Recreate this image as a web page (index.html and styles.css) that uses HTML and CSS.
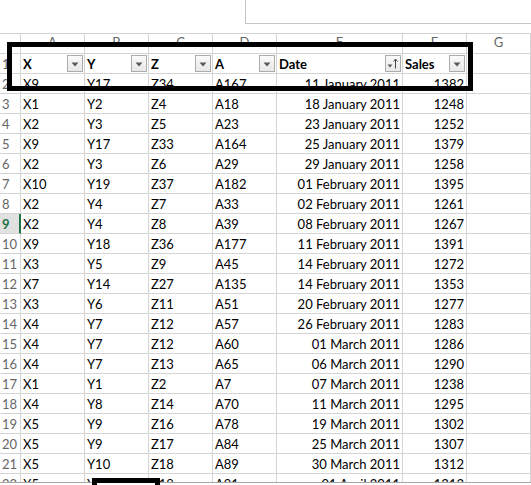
FILE: index.html
```html
<!DOCTYPE html>
<html>
<head>
<meta charset="utf-8">
<link rel="stylesheet" href="styles.css">
</head>
<body>
<div class="toolbar"><div class="spacer"></div><div class="formula"></div></div>
<div class="sheet">
  <div class="row colhdr">
    <div class="c rh"></div><div class="c">A</div><div class="c">B</div><div class="c">C</div><div class="c">D</div><div class="c">E</div><div class="c">F</div><div class="c">G</div>
  </div>
  <div class="row head">
    <div class="c rh">1</div>
    <div class="c t">X<span class="fb"><svg width="14" height="15" viewBox="0 0 14 15"><path d="M3.5 6.5h7l-3.5 4z" fill="#5a5a5a"/></svg></span></div>
    <div class="c t">Y<span class="fb"><svg width="14" height="15" viewBox="0 0 14 15"><path d="M3.5 6.5h7l-3.5 4z" fill="#5a5a5a"/></svg></span></div>
    <div class="c t">Z<span class="fb"><svg width="14" height="15" viewBox="0 0 14 15"><path d="M3.5 6.5h7l-3.5 4z" fill="#5a5a5a"/></svg></span></div>
    <div class="c t">A<span class="fb"><svg width="14" height="15" viewBox="0 0 14 15"><path d="M3.5 6.5h7l-3.5 4z" fill="#5a5a5a"/></svg></span></div>
    <div class="c t">Date<span class="fb"><svg width="14" height="15" viewBox="0 0 14 15"><path d="M1.5 8.5h5l-2.5 3z" fill="#5a5a5a"/><path d="M9.5 12.5V3.5" stroke="#444" stroke-width="1"/><path d="M7.5 5.5l2-2.5 2 2.5" fill="none" stroke="#444" stroke-width="1"/></svg></span></div>
    <div class="c t">Sales<span class="fb"><svg width="14" height="15" viewBox="0 0 14 15"><path d="M3.5 6.5h7l-3.5 4z" fill="#5a5a5a"/></svg></span></div>
    <div class="c"></div>
  </div>
  <div class="row"><div class="c rh">2</div><div class="c t">X9</div><div class="c t">Y17</div><div class="c t">Z34</div><div class="c t">A167</div><div class="c n">11 January 2011</div><div class="c n">1382</div><div class="c"></div></div>
  <div class="row"><div class="c rh">3</div><div class="c t">X1</div><div class="c t">Y2</div><div class="c t">Z4</div><div class="c t">A18</div><div class="c n">18 January 2011</div><div class="c n">1248</div><div class="c"></div></div>
  <div class="row"><div class="c rh">4</div><div class="c t">X2</div><div class="c t">Y3</div><div class="c t">Z5</div><div class="c t">A23</div><div class="c n">23 January 2011</div><div class="c n">1252</div><div class="c"></div></div>
  <div class="row"><div class="c rh">5</div><div class="c t">X9</div><div class="c t">Y17</div><div class="c t">Z33</div><div class="c t">A164</div><div class="c n">25 January 2011</div><div class="c n">1379</div><div class="c"></div></div>
  <div class="row"><div class="c rh">6</div><div class="c t">X2</div><div class="c t">Y3</div><div class="c t">Z6</div><div class="c t">A29</div><div class="c n">29 January 2011</div><div class="c n">1258</div><div class="c"></div></div>
  <div class="row"><div class="c rh">7</div><div class="c t">X10</div><div class="c t">Y19</div><div class="c t">Z37</div><div class="c t">A182</div><div class="c n">01 February 2011</div><div class="c n">1395</div><div class="c"></div></div>
  <div class="row"><div class="c rh">8</div><div class="c t">X2</div><div class="c t">Y4</div><div class="c t">Z7</div><div class="c t">A33</div><div class="c n">02 February 2011</div><div class="c n">1261</div><div class="c"></div></div>
  <div class="row"><div class="c rh sel">9</div><div class="c t">X2</div><div class="c t">Y4</div><div class="c t">Z8</div><div class="c t">A39</div><div class="c n">08 February 2011</div><div class="c n">1267</div><div class="c"></div></div>
  <div class="row"><div class="c rh">10</div><div class="c t">X9</div><div class="c t">Y18</div><div class="c t">Z36</div><div class="c t">A177</div><div class="c n">11 February 2011</div><div class="c n">1391</div><div class="c"></div></div>
  <div class="row"><div class="c rh">11</div><div class="c t">X3</div><div class="c t">Y5</div><div class="c t">Z9</div><div class="c t">A45</div><div class="c n">14 February 2011</div><div class="c n">1272</div><div class="c"></div></div>
  <div class="row"><div class="c rh">12</div><div class="c t">X7</div><div class="c t">Y14</div><div class="c t">Z27</div><div class="c t">A135</div><div class="c n">14 February 2011</div><div class="c n">1353</div><div class="c"></div></div>
  <div class="row"><div class="c rh">13</div><div class="c t">X3</div><div class="c t">Y6</div><div class="c t">Z11</div><div class="c t">A51</div><div class="c n">20 February 2011</div><div class="c n">1277</div><div class="c"></div></div>
  <div class="row"><div class="c rh">14</div><div class="c t">X4</div><div class="c t">Y7</div><div class="c t">Z12</div><div class="c t">A57</div><div class="c n">26 February 2011</div><div class="c n">1283</div><div class="c"></div></div>
  <div class="row"><div class="c rh">15</div><div class="c t">X4</div><div class="c t">Y7</div><div class="c t">Z12</div><div class="c t">A60</div><div class="c n">01 March 2011</div><div class="c n">1286</div><div class="c"></div></div>
  <div class="row"><div class="c rh">16</div><div class="c t">X4</div><div class="c t">Y7</div><div class="c t">Z13</div><div class="c t">A65</div><div class="c n">06 March 2011</div><div class="c n">1290</div><div class="c"></div></div>
  <div class="row"><div class="c rh">17</div><div class="c t">X1</div><div class="c t">Y1</div><div class="c t">Z2</div><div class="c t">A7</div><div class="c n">07 March 2011</div><div class="c n">1238</div><div class="c"></div></div>
  <div class="row"><div class="c rh">18</div><div class="c t">X4</div><div class="c t">Y8</div><div class="c t">Z14</div><div class="c t">A70</div><div class="c n">11 March 2011</div><div class="c n">1295</div><div class="c"></div></div>
  <div class="row"><div class="c rh">19</div><div class="c t">X5</div><div class="c t">Y9</div><div class="c t">Z16</div><div class="c t">A78</div><div class="c n">19 March 2011</div><div class="c n">1302</div><div class="c"></div></div>
  <div class="row"><div class="c rh">20</div><div class="c t">X5</div><div class="c t">Y9</div><div class="c t">Z17</div><div class="c t">A84</div><div class="c n">25 March 2011</div><div class="c n">1307</div><div class="c"></div></div>
  <div class="row"><div class="c rh">21</div><div class="c t">X5</div><div class="c t">Y10</div><div class="c t">Z18</div><div class="c t">A89</div><div class="c n">30 March 2011</div><div class="c n">1312</div><div class="c"></div></div>
  <div class="row"><div class="c rh">22</div><div class="c t">X5</div><div class="c t">Y10</div><div class="c t">Z18</div><div class="c t">A91</div><div class="c n">01 April 2011</div><div class="c n">1313</div><div class="c"></div></div>
</div>
<div class="tabbar"></div>
<div class="mark mark-head"></div>
<div class="mark mark-bottom"></div>
</body>
</html>
```
FILE: styles.css
```css
html, body {
  margin: 0;
  padding: 0;
  background: #fff;
}
body {
  width: 531px;
  height: 485px;
  overflow: hidden;
  position: relative;
  font-family: Lato, "Liberation Sans", sans-serif;
  font-size: 13px;
  color: #000;
}
.toolbar {
  display: flex;
  height: 24px;
  margin-bottom: 9px;
}
.spacer {
  width: 245px;
  flex: none;
}
.formula {
  flex: 1;
  box-sizing: border-box;
  border-left: 1px solid #c6c6c6;
  border-bottom: 1px solid #c6c6c6;
}
.sheet {
  box-sizing: border-box;
  height: 449px;
  overflow: hidden;
  border-top: 1px solid #d4d4d4;
}
.row {
  display: grid;
  grid-template-columns: 21px 64px 64px 64px 64px 126px 64px 64px;
  height: 20px;
}
.c {
  box-sizing: border-box;
  height: 20px;
  border-right: 1px solid #d4d4d4;
  border-bottom: 1px solid #d4d4d4;
  line-height: 20px;
  white-space: nowrap;
  overflow: visible;
  position: relative;
}
.t {
  padding-left: 2px;
  text-align: left;
}
.n {
  padding-right: 2px;
  text-align: right;
}
.rh {
  color: #666;
  padding-left: 2px;
  text-align: left;
}
.rh.sel {
  background: #e1e1e1;
  color: #217346;
  font-weight: 700;
  border-right: 2px solid #217346;
}
.colhdr .c {
  color: #666;
  text-align: center;
  line-height: 17px;
}
.head .t {
  font-weight: 700;
}
.fb {
  position: absolute;
  right: 1px;
  top: 1px;
  width: 16px;
  height: 17px;
  box-sizing: border-box;
  border: 1px solid #acacac;
  background: linear-gradient(#fafafa, #e8e8e8);
  display: flex;
  align-items: center;
  justify-content: center;
}
.fb svg {
  display: block;
}
.tabbar {
  height: 3px;
  border-top: 1px solid #a6a6a6;
  background: #fff;
}
.mark {
  position: absolute;
  box-sizing: border-box;
  border: 5px solid #000;
}
.mark-head {
  left: 7px;
  top: 42px;
  width: 466px;
  height: 49px;
}
.mark-bottom {
  left: 92px;
  top: 478px;
  width: 68px;
  height: 30px;
  background: #fff;
}
```
